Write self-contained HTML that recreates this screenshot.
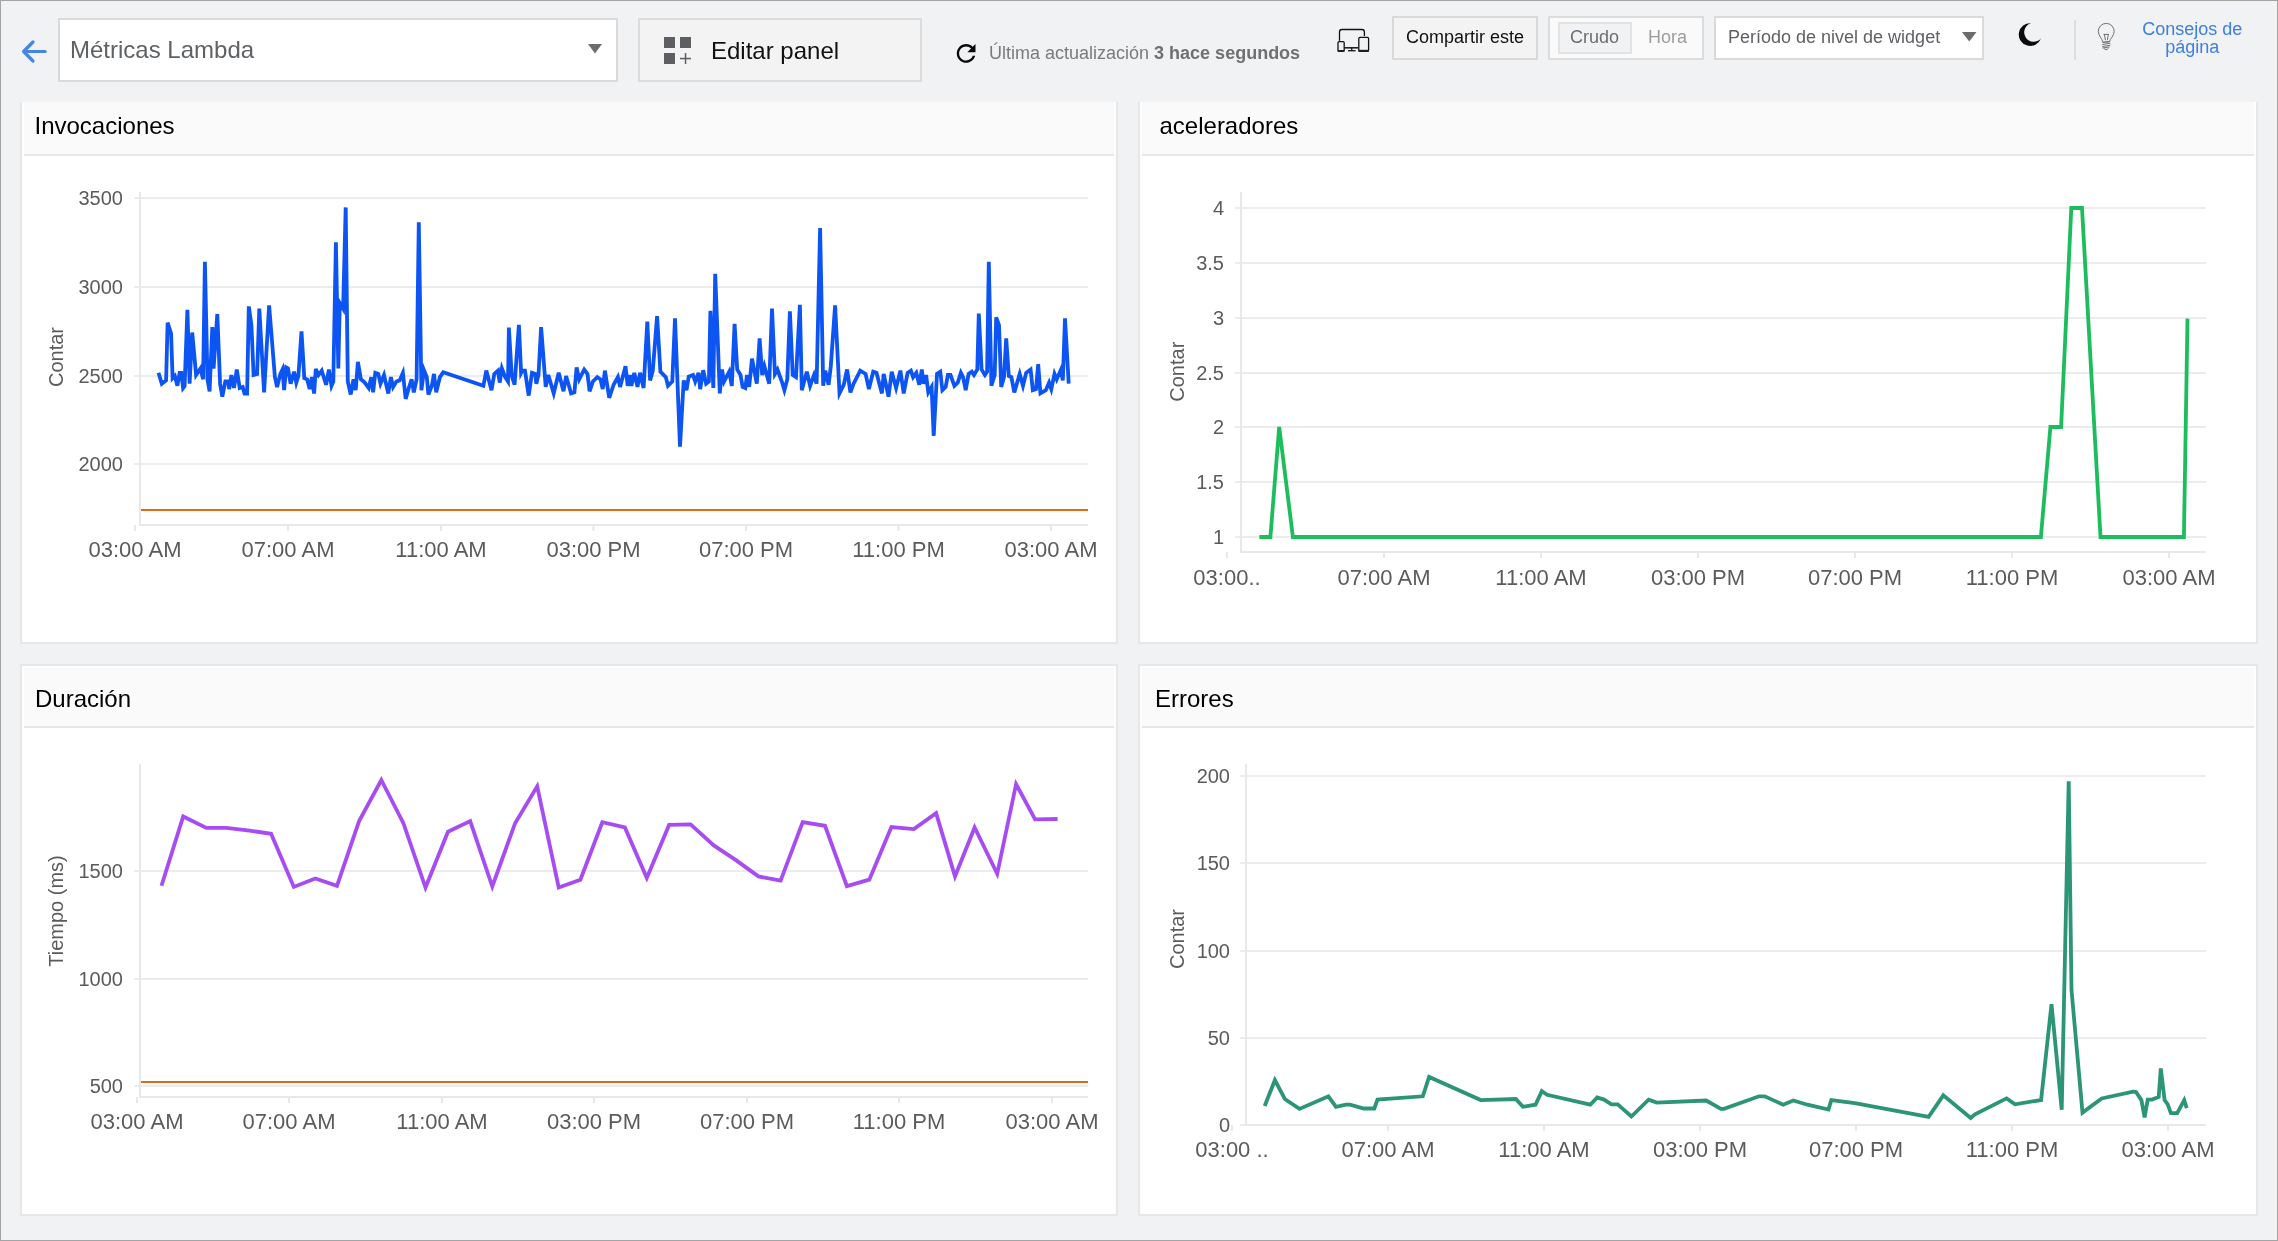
<!DOCTYPE html>
<html><head><meta charset="utf-8"><title>Métricas Lambda</title>
<style>
html,body{margin:0;padding:0}
body{width:2278px;height:1241px;overflow:hidden;background:#f1f2f4;font-family:"Liberation Sans", sans-serif;position:relative}
.abs{position:absolute;box-sizing:border-box}
.frame{left:0;top:0;width:2278px;height:1241px;border:1px solid #a4a4a4;z-index:5;pointer-events:none}
.clip{left:0;top:102px;width:2278px;height:1139px;overflow:hidden}
.panel{position:absolute;box-sizing:border-box;border:2px solid #e7e7e7;background:#fff;height:552px}
.phead{position:absolute;left:2px;top:2px;right:2px;height:60px;box-sizing:border-box;background:#fafafa;border-bottom:2px solid #e6e6e6}
svg{position:absolute;left:0;top:0;will-change:transform}
svg text{font-family:"Liberation Sans", sans-serif}
</style></head><body>
<div class="abs" style="left:58px;top:18px;width:560px;height:64px;border:2px solid #dadada;background:#fff"></div>
<div class="abs" style="left:638px;top:18px;width:284px;height:64px;border:2px solid #dcdcdc;background:#f3f3f3"></div>
<div class="abs" style="left:1392px;top:16px;width:146px;height:44px;border:2px solid #d9d9d9;background:#f3f3f3"></div>
<div class="abs" style="left:1548px;top:16px;width:156px;height:44px;border:2px solid #dcdcdc;background:#fafafa"></div>
<div class="abs" style="left:1558px;top:22px;width:74px;height:32px;border:2px solid #e2e2e2;background:#f1f2f4"></div>
<div class="abs" style="left:1714px;top:16px;width:270px;height:44px;border:2px solid #dadada;background:#fff"></div>
<div class="abs" style="left:2074px;top:20px;width:2px;height:40px;background:#dedede"></div>
<div class="abs clip">
  <div class="panel" style="left:20px;top:-10px;width:1098px"><div class="phead"></div></div>
  <div class="panel" style="left:1138px;top:-10px;width:1120px"><div class="phead"></div></div>
  <div class="panel" style="left:20px;top:562px;width:1098px"><div class="phead"></div></div>
  <div class="panel" style="left:1138px;top:562px;width:1120px"><div class="phead"></div></div>
</div>
<svg width="2278" height="1241" viewBox="0 0 2278 1241">
<g fill="none" stroke="#4585e6" stroke-width="3.2" stroke-linecap="round" stroke-linejoin="round">
<path d="M45.2 51.5H23.6M33 42L23.6 51.5L33 61"/>
</g>
<text x="70" y="58" font-size="24" fill="#5f6265" text-anchor="start" font-weight="normal" >Métricas Lambda</text>
<path d="M588 44h14l-7 9.5z" fill="#6b6c6e"/>
<g fill="#5c5e61"><rect x="664" y="37" width="11" height="11"/><rect x="680" y="37" width="11" height="11"/><rect x="664" y="53" width="11" height="11"/>
<rect x="684.8" y="53" width="1.5" height="11"/><rect x="680" y="57.8" width="11" height="1.5"/></g>
<text x="711" y="58.5" font-size="24" fill="#111" text-anchor="start" font-weight="normal" >Editar panel</text>
<g transform="translate(952.1,39.4) scale(1.17)"><path fill="#0a0a0a" d="M17.65 6.35C16.2 4.9 14.21 4 12 4c-4.42 0-7.99 3.58-7.99 8s3.57 8 7.99 8c3.730 0 6.84-2.55 7.73-6h-2.08c-.82 2.33-3.04 4-5.65 4-3.31 0-6-2.69-6-6s2.690-6 6-6c1.66 0 3.14.69 4.22 1.78L13 11h7V4l-2.35 2.35z"/></g>
<text x="989" y="58.8" font-size="18" fill="#7b7b7b">Última actualización <tspan font-weight="bold" fill="#707070">3 hace segundos</tspan></text>
<g fill="none" stroke="#111" stroke-width="1.3">
<path d="M1339.5 40.8V32a2.5 2.5 0 0 1 2.5-2.5h19.9a2.5 2.5 0 0 1 2.5 2.5v4.1"/>
<rect x="1338" y="41.6" width="6.2" height="9.7" rx="1.2"/>
<rect x="1358.8" y="37.4" width="9.8" height="13.9" rx="1.2"/>
</g>
<g fill="#222"><rect x="1344.4" y="47" width="14.3" height="1.6"/><rect x="1351" y="47.8" width="1.4" height="2.8"/><rect x="1348" y="50" width="7.6" height="1.4"/>
<rect x="1337.6" y="50" width="6.9" height="1.6"/><rect x="1358.4" y="49.8" width="10.6" height="1.9"/></g>
<text x="1406" y="43" font-size="18" fill="#111" text-anchor="start" font-weight="normal" >Compartir este</text>
<text x="1570" y="42.6" font-size="18" fill="#6d6e70" text-anchor="start" font-weight="normal" >Crudo</text>
<text x="1648" y="42.6" font-size="18" fill="#9d9d9d" text-anchor="start" font-weight="normal" >Hora</text>
<text x="1728" y="42.7" font-size="18" fill="#5f6164" text-anchor="start" font-weight="normal" >Período de nivel de widget</text>
<path d="M1962 32h14.5l-7.25 9.6z" fill="#6b6c6e"/>
<path d="M2031.1 23.2A11.4 11.4 0 1 0 2040.9 38.4A9.46 9.46 0 1 1 2031.1 23.2Z" fill="#0c0c0c"/>
<g fill="none" stroke="#6a6a6a" stroke-width="0.95" stroke-linecap="round" stroke-linejoin="round">
<path d="M2102.9 42C2102.4 38.5 2098.3 36 2098.3 31.3A7.95 7.95 0 0 1 2114.2 31.3C2114.2 36 2110 38.5 2109.5 41.5Z"/>
<path d="M2102.9 42.3L2109.5 41.5M2102.6 44.5L2110 43.3M2102.6 46.5L2110 45.3M2102.8 48L2109.2 47M2104.3 48.7L2106.1 49.8L2108.1 48.6"/>
<path d="M2104.3 34.4L2105.4 39.8M2108.3 34.4L2107.4 39.8M2104 34.4H2108.6"/>
</g>
<text x="2192.2" y="34.7" font-size="18" fill="#3d7ee0" text-anchor="middle">Consejos de</text>
<text x="2192.2" y="53" font-size="18" fill="#3d7ee0" text-anchor="middle">página</text>
<text x="34.5" y="133.8" font-size="24" fill="#000" text-anchor="start" font-weight="normal" >Invocaciones</text>
<text x="1159.5" y="133.8" font-size="24" fill="#000" text-anchor="start" font-weight="normal" >aceleradores</text>
<text x="35" y="707.2" font-size="24" fill="#000" text-anchor="start" font-weight="normal" >Duración</text>
<text x="1155" y="707.2" font-size="24" fill="#000" text-anchor="start" font-weight="normal" >Errores</text>
<rect x="134" y="197" width="954" height="2" fill="#ececec"/>
<text x="123" y="205" font-size="20" fill="#5b5b5b" text-anchor="end" font-weight="normal" >3500</text>
<rect x="134" y="286" width="954" height="2" fill="#ececec"/>
<text x="123" y="294" font-size="20" fill="#5b5b5b" text-anchor="end" font-weight="normal" >3000</text>
<rect x="134" y="375" width="954" height="2" fill="#ececec"/>
<text x="123" y="383" font-size="20" fill="#5b5b5b" text-anchor="end" font-weight="normal" >2500</text>
<rect x="134" y="463" width="954" height="2" fill="#ececec"/>
<text x="123" y="471" font-size="20" fill="#5b5b5b" text-anchor="end" font-weight="normal" >2000</text>
<rect x="139" y="192" width="2" height="334" fill="#e8e8e8"/>
<rect x="139" y="524" width="949" height="2" fill="#e8e8e8"/>
<rect x="134" y="525" width="2" height="6" fill="#e8e8e8"/>
<text x="135" y="557" font-size="22" fill="#5b5b5b" text-anchor="middle" font-weight="normal" >03:00 AM</text>
<rect x="287" y="525" width="2" height="6" fill="#e8e8e8"/>
<text x="288" y="557" font-size="22" fill="#5b5b5b" text-anchor="middle" font-weight="normal" >07:00 AM</text>
<rect x="440" y="525" width="2" height="6" fill="#e8e8e8"/>
<text x="441" y="557" font-size="22" fill="#5b5b5b" text-anchor="middle" font-weight="normal" >11:00 AM</text>
<rect x="592.5" y="525" width="2" height="6" fill="#e8e8e8"/>
<text x="593.5" y="557" font-size="22" fill="#5b5b5b" text-anchor="middle" font-weight="normal" >03:00 PM</text>
<rect x="745" y="525" width="2" height="6" fill="#e8e8e8"/>
<text x="746" y="557" font-size="22" fill="#5b5b5b" text-anchor="middle" font-weight="normal" >07:00 PM</text>
<rect x="897.5" y="525" width="2" height="6" fill="#e8e8e8"/>
<text x="898.5" y="557" font-size="22" fill="#5b5b5b" text-anchor="middle" font-weight="normal" >11:00 PM</text>
<rect x="1050" y="525" width="2" height="6" fill="#e8e8e8"/>
<text x="1051" y="557" font-size="22" fill="#5b5b5b" text-anchor="middle" font-weight="normal" >03:00 AM</text>
<text transform="translate(62.5,357) rotate(-90)" font-size="20" fill="#5b5b5b" text-anchor="middle">Contar</text>
<rect x="141" y="509" width="947" height="2" fill="#dd6b17"/>
<polyline points="158.5,372.8 161.8,383.7 166.1,380.4 167.6,322.7 171.1,333.6 172.6,378.2 174.8,376.0 177.4,385.8 179.6,372.8 181.3,372.8 183.1,388.0 184.6,386.0 187.4,309.7 189.6,383.7 192.2,332.5 196.1,375.0 200.5,368.5 203.1,379.3 204.9,261.8 207.5,379.3 209.6,391.3 212.3,327.1 213.6,368.5 217.3,314.0 220.1,383.7 222.3,396.7 225.3,381.5 228.1,381.5 229.2,389.1 231.4,375.0 234.0,388.0 236.8,369.5 239.7,388.0 242.7,387.0 244.5,393.5 247.1,393.5 248.8,306.4 251.4,324.9 253.6,375.0 257.1,374.0 259.3,308.6 264.1,392.4 269.1,305.3 272.1,342.3 274.9,377.1 277.1,387.0 280.4,373.9 282.5,369.5 284.1,390.2 286.2,367.4 288.0,368.5 290.6,383.7 294.1,371.7 296.3,382.6 298.4,376.0 301.5,331.4 304.3,378.2 307.1,379.3 309.7,389.1 311.9,377.1 314.1,393.5 315.8,368.9 318.5,375.0 321.7,370.6 326.1,384.8 328.9,369.5 331.5,385.8 333.3,381.5 335.9,242.2 338.3,368.4 339.8,303.1 343.1,308.6 345.7,207.4 347.8,381.5 350.7,394.5 353.5,379.3 355.7,390.2 357.9,361.9 360.9,379.3 364.8,382.6 368.7,388.0 371.3,377.1 373.1,392.4 375.3,372.8 378.3,373.9 380.5,383.7 384.0,375.0 388.3,393.5 390.9,377.1 393.1,386.9 396.4,381.5 399.6,380.4 402.9,372.8 405.7,398.9 408.8,388.0 411.6,379.3 413.8,392.4 416.6,379.3 418.8,222.2 421.4,390.2 424.0,370.2 426.8,377.1 428.4,394.5 431.8,385.8 434.0,373.9 436.2,392.4 439.9,377.1 443.2,372.3 483.4,385.8 486.3,370.6 491.5,390.2 494.3,373.9 498.0,370.6 499.7,382.6 501.9,368.4 505.2,377.1 508.0,381.5 508.9,327.5 511.7,376.0 514.6,384.7 518.9,324.9 521.1,372.8 522.2,370.6 525.0,370.6 528.7,395.6 532.0,372.8 535.2,373.9 536.3,383.7 538.5,375.0 541.1,327.1 545.7,386.9 548.3,375.0 553.7,393.4 558.7,372.8 563.5,391.3 566.1,376.0 571.1,393.4 574.4,392.4 576.6,367.3 579.2,379.3 584.2,369.5 587.5,373.9 589.6,391.3 592.9,381.5 597.3,377.1 600.5,379.3 602.7,389.1 604.9,370.6 609.2,397.8 613.6,384.7 617.9,377.1 620.1,386.9 625.5,366.2 627.7,385.8 629.9,375.0 631.4,385.8 634.3,372.8 637.5,386.9 640.1,372.8 643.6,388.0 647.3,321.6 650.1,380.4 652.8,370.6 657.1,316.2 660.4,371.7 665.8,377.1 668.0,385.8 672.3,381.5 675.0,318.4 680.0,446.7 683.7,380.4 686.5,390.2 688.7,376.7 693.0,375.0 695.2,381.5 698.5,372.8 700.2,389.1 703.2,370.2 706.1,383.7 708.9,381.5 710.4,310.8 713.3,388.0 715.2,273.8 719.8,393.4 722.0,369.5 724.1,381.5 729.2,371.7 731.8,385.8 734.6,323.8 737.2,369.5 740.5,375.0 742.6,386.9 745.3,388.0 747.0,375.0 749.2,386.9 752.0,358.6 756.8,383.7 759.6,338.4 762.2,375.0 764.4,366.2 769.2,383.7 772.0,308.6 774.9,374.0 777.5,369.5 781.8,381.5 784.4,390.2 787.3,379.3 789.9,311.4 792.7,375.0 796.0,377.1 799.9,304.9 801.8,390.2 806.8,371.7 810.1,385.8 814.0,375.0 816.6,383.7 820.1,228.1 823.2,385.8 825.3,370.6 828.6,384.7 830.8,366.2 835.1,305.3 839.5,393.4 843.8,384.7 847.1,369.5 850.4,392.4 853.6,383.7 860.2,370.6 865.6,373.9 868.9,389.1 873.2,371.7 876.5,372.8 881.9,393.4 883.7,373.9 888.5,396.7 891.7,371.7 896.1,388.0 900.4,370.6 903.7,393.4 907.6,372.8 910.9,370.6 913.1,377.1 916.3,372.8 919.2,384.7 921.8,369.5 923.5,383.7 926.1,375.0 928.3,392.4 931.6,386.9 933.7,435.9 937.0,373.9 940.3,371.7 942.4,390.2 945.7,386.9 947.9,375.0 950.5,375.0 954.4,385.8 957.7,382.6 960.9,372.8 963.1,377.1 965.7,390.2 968.6,373.9 971.8,371.7 974.0,375.0 977.3,369.5 978.8,313.6 981.6,369.5 984.9,375.0 987.1,371.7 988.8,261.8 991.4,385.8 994.7,375.0 996.2,317.3 999.0,325.0 1001.2,386.9 1004.0,377.1 1006.2,338.4 1008.8,376.0 1011.4,377.1 1014.3,392.4 1019.7,373.9 1023.0,385.8 1026.2,372.8 1030.6,369.5 1032.8,390.2 1036.0,389.1 1038.2,364.1 1040.4,393.4 1045.8,390.2 1049.1,382.6 1051.3,389.1 1054.5,373.9 1056.7,379.3 1061.0,369.5 1062.8,380.4 1065.0,318.4 1068.7,383.7" fill="none" stroke="#0d55f2" stroke-width="3.8" stroke-linejoin="miter"/>
<rect x="1235" y="207" width="971" height="2" fill="#ececec"/>
<text x="1224" y="215" font-size="20" fill="#5b5b5b" text-anchor="end" font-weight="normal" >4</text>
<rect x="1235" y="262" width="971" height="2" fill="#ececec"/>
<text x="1224" y="270" font-size="20" fill="#5b5b5b" text-anchor="end" font-weight="normal" >3.5</text>
<rect x="1235" y="317" width="971" height="2" fill="#ececec"/>
<text x="1224" y="325" font-size="20" fill="#5b5b5b" text-anchor="end" font-weight="normal" >3</text>
<rect x="1235" y="372" width="971" height="2" fill="#ececec"/>
<text x="1224" y="380" font-size="20" fill="#5b5b5b" text-anchor="end" font-weight="normal" >2.5</text>
<rect x="1235" y="426" width="971" height="2" fill="#ececec"/>
<text x="1224" y="434" font-size="20" fill="#5b5b5b" text-anchor="end" font-weight="normal" >2</text>
<rect x="1235" y="481" width="971" height="2" fill="#ececec"/>
<text x="1224" y="489" font-size="20" fill="#5b5b5b" text-anchor="end" font-weight="normal" >1.5</text>
<rect x="1235" y="536" width="971" height="2" fill="#ececec"/>
<text x="1224" y="544" font-size="20" fill="#5b5b5b" text-anchor="end" font-weight="normal" >1</text>
<rect x="1240" y="192" width="2" height="361" fill="#e8e8e8"/>
<rect x="1240" y="551" width="966" height="2" fill="#e8e8e8"/>
<rect x="1226" y="552" width="2" height="6" fill="#e8e8e8"/>
<text x="1227" y="585" font-size="22" fill="#5b5b5b" text-anchor="middle" font-weight="normal" >03:00..</text>
<rect x="1383" y="552" width="2" height="6" fill="#e8e8e8"/>
<text x="1384" y="585" font-size="22" fill="#5b5b5b" text-anchor="middle" font-weight="normal" >07:00 AM</text>
<rect x="1540" y="552" width="2" height="6" fill="#e8e8e8"/>
<text x="1541" y="585" font-size="22" fill="#5b5b5b" text-anchor="middle" font-weight="normal" >11:00 AM</text>
<rect x="1697" y="552" width="2" height="6" fill="#e8e8e8"/>
<text x="1698" y="585" font-size="22" fill="#5b5b5b" text-anchor="middle" font-weight="normal" >03:00 PM</text>
<rect x="1854" y="552" width="2" height="6" fill="#e8e8e8"/>
<text x="1855" y="585" font-size="22" fill="#5b5b5b" text-anchor="middle" font-weight="normal" >07:00 PM</text>
<rect x="2011" y="552" width="2" height="6" fill="#e8e8e8"/>
<text x="2012" y="585" font-size="22" fill="#5b5b5b" text-anchor="middle" font-weight="normal" >11:00 PM</text>
<rect x="2168" y="552" width="2" height="6" fill="#e8e8e8"/>
<text x="2169" y="585" font-size="22" fill="#5b5b5b" text-anchor="middle" font-weight="normal" >03:00 AM</text>
<text transform="translate(1183.5,371.7) rotate(-90)" font-size="20" fill="#5b5b5b" text-anchor="middle">Contar</text>
<polyline points="1259.4,537.0 1270.4,537.0 1279.2,427.0 1292.9,537.0 2040.9,537.0 2050.4,427.0 2061.1,427.0 2071.3,208.0 2082.0,208.0 2100.5,537.0 2183.9,537.0 2187.5,318.6" fill="none" stroke="#1dbd5e" stroke-width="3.8" stroke-linejoin="miter"/>
<rect x="134" y="870" width="954" height="2" fill="#ececec"/>
<text x="123" y="878" font-size="20" fill="#5b5b5b" text-anchor="end" font-weight="normal" >1500</text>
<rect x="134" y="978" width="954" height="2" fill="#ececec"/>
<text x="123" y="986" font-size="20" fill="#5b5b5b" text-anchor="end" font-weight="normal" >1000</text>
<rect x="134" y="1085" width="954" height="2" fill="#ececec"/>
<text x="123" y="1093" font-size="20" fill="#5b5b5b" text-anchor="end" font-weight="normal" >500</text>
<rect x="139" y="764" width="2" height="334" fill="#e8e8e8"/>
<rect x="139" y="1096" width="949" height="2" fill="#e8e8e8"/>
<rect x="136" y="1097" width="2" height="6" fill="#e8e8e8"/>
<text x="137" y="1129" font-size="22" fill="#5b5b5b" text-anchor="middle" font-weight="normal" >03:00 AM</text>
<rect x="288" y="1097" width="2" height="6" fill="#e8e8e8"/>
<text x="289" y="1129" font-size="22" fill="#5b5b5b" text-anchor="middle" font-weight="normal" >07:00 AM</text>
<rect x="441" y="1097" width="2" height="6" fill="#e8e8e8"/>
<text x="442" y="1129" font-size="22" fill="#5b5b5b" text-anchor="middle" font-weight="normal" >11:00 AM</text>
<rect x="593" y="1097" width="2" height="6" fill="#e8e8e8"/>
<text x="594" y="1129" font-size="22" fill="#5b5b5b" text-anchor="middle" font-weight="normal" >03:00 PM</text>
<rect x="746" y="1097" width="2" height="6" fill="#e8e8e8"/>
<text x="747" y="1129" font-size="22" fill="#5b5b5b" text-anchor="middle" font-weight="normal" >07:00 PM</text>
<rect x="898" y="1097" width="2" height="6" fill="#e8e8e8"/>
<text x="899" y="1129" font-size="22" fill="#5b5b5b" text-anchor="middle" font-weight="normal" >11:00 PM</text>
<rect x="1051" y="1097" width="2" height="6" fill="#e8e8e8"/>
<text x="1052" y="1129" font-size="22" fill="#5b5b5b" text-anchor="middle" font-weight="normal" >03:00 AM</text>
<text transform="translate(62.6,911) rotate(-90)" font-size="20" fill="#5b5b5b" text-anchor="middle">Tiempo (ms)</text>
<rect x="141" y="1081" width="947" height="2" fill="#dd6b17"/>
<polyline points="161.5,885.8 183.2,816.5 206.4,827.9 226.4,827.9 249.6,830.6 271.1,833.8 293.8,886.9 315.3,878.5 337.0,885.8 359.1,821.1 381.3,780.0 403.4,823.2 425.5,887.5 448.0,831.7 470.2,821.1 492.3,886.5 515.1,823.2 537.2,786.3 558.7,887.5 580.4,879.7 602.3,822.2 624.9,827.5 646.8,878.0 669.1,824.9 690.6,824.3 713.8,845.4 735.9,860.1 758.4,876.4 780.6,880.6 802.7,822.2 825.0,825.8 846.9,886.1 869.3,879.7 891.4,827.0 913.9,829.1 936.1,813.1 955.0,876.4 974.6,827.5 997.2,873.8 1016.1,784.2 1035.1,819.4 1057.6,819.0" fill="none" stroke="#a64cf2" stroke-width="3.8" stroke-linejoin="miter"/>
<rect x="1240" y="775" width="966" height="2" fill="#ececec"/>
<text x="1230" y="783" font-size="20" fill="#5b5b5b" text-anchor="end" font-weight="normal" >200</text>
<rect x="1240" y="862" width="966" height="2" fill="#ececec"/>
<text x="1230" y="870" font-size="20" fill="#5b5b5b" text-anchor="end" font-weight="normal" >150</text>
<rect x="1240" y="950" width="966" height="2" fill="#ececec"/>
<text x="1230" y="958" font-size="20" fill="#5b5b5b" text-anchor="end" font-weight="normal" >100</text>
<rect x="1240" y="1037" width="966" height="2" fill="#ececec"/>
<text x="1230" y="1045" font-size="20" fill="#5b5b5b" text-anchor="end" font-weight="normal" >50</text>
<rect x="1240" y="1124" width="966" height="2" fill="#ececec"/>
<text x="1230" y="1132" font-size="20" fill="#5b5b5b" text-anchor="end" font-weight="normal" >0</text>
<rect x="1245" y="764" width="2" height="362" fill="#e8e8e8"/>
<rect x="1245" y="1124" width="961" height="2" fill="#e8e8e8"/>
<rect x="1231" y="1125" width="2" height="6" fill="#e8e8e8"/>
<text x="1232" y="1157" font-size="22" fill="#5b5b5b" text-anchor="middle" font-weight="normal" >03:00 ..</text>
<rect x="1387" y="1125" width="2" height="6" fill="#e8e8e8"/>
<text x="1388" y="1157" font-size="22" fill="#5b5b5b" text-anchor="middle" font-weight="normal" >07:00 AM</text>
<rect x="1543" y="1125" width="2" height="6" fill="#e8e8e8"/>
<text x="1544" y="1157" font-size="22" fill="#5b5b5b" text-anchor="middle" font-weight="normal" >11:00 AM</text>
<rect x="1699" y="1125" width="2" height="6" fill="#e8e8e8"/>
<text x="1700" y="1157" font-size="22" fill="#5b5b5b" text-anchor="middle" font-weight="normal" >03:00 PM</text>
<rect x="1855" y="1125" width="2" height="6" fill="#e8e8e8"/>
<text x="1856" y="1157" font-size="22" fill="#5b5b5b" text-anchor="middle" font-weight="normal" >07:00 PM</text>
<rect x="2011" y="1125" width="2" height="6" fill="#e8e8e8"/>
<text x="2012" y="1157" font-size="22" fill="#5b5b5b" text-anchor="middle" font-weight="normal" >11:00 PM</text>
<rect x="2167" y="1125" width="2" height="6" fill="#e8e8e8"/>
<text x="2168" y="1157" font-size="22" fill="#5b5b5b" text-anchor="middle" font-weight="normal" >03:00 AM</text>
<text transform="translate(1183.5,939) rotate(-90)" font-size="20" fill="#5b5b5b" text-anchor="middle">Contar</text>
<polyline points="1264.7,1106.0 1274.9,1080.0 1284.8,1099.0 1299.5,1108.9 1328.4,1096.3 1336.0,1106.8 1345.9,1104.7 1350.0,1104.7 1363.8,1108.5 1374.3,1108.5 1377.5,1099.6 1422.8,1096.3 1429.1,1076.9 1480.7,1100.1 1515.9,1099.0 1522.9,1106.8 1535.5,1104.7 1541.8,1091.2 1547.1,1094.8 1590.3,1104.7 1597.2,1097.5 1604.0,1099.6 1611.4,1104.3 1617.7,1104.3 1631.4,1116.5 1648.6,1099.6 1656.7,1102.6 1706.2,1100.5 1720.9,1108.9 1724.0,1108.9 1759.0,1096.3 1764.7,1096.3 1783.2,1104.7 1793.3,1100.5 1807.4,1104.7 1828.5,1109.5 1831.3,1100.1 1854.8,1103.2 1928.6,1116.9 1943.3,1095.4 1970.7,1118.0 1975.0,1114.4 2006.6,1098.4 2015.0,1104.3 2041.1,1100.0 2051.5,1004.1 2061.7,1109.8 2068.7,781.3 2071.5,990.0 2082.5,1112.6 2101.7,1098.5 2133.0,1091.6 2136.0,1092.0 2141.4,1100.1 2144.6,1117.3 2147.7,1099.6 2152.0,1099.6 2158.7,1096.9 2160.8,1068.4 2164.6,1100.1 2167.7,1104.3 2170.9,1113.1 2177.2,1113.1 2184.2,1100.1 2186.7,1108.1" fill="none" stroke="#2b9575" stroke-width="3.8" stroke-linejoin="miter"/>
</svg>
<div class="abs frame"></div>
</body></html>
